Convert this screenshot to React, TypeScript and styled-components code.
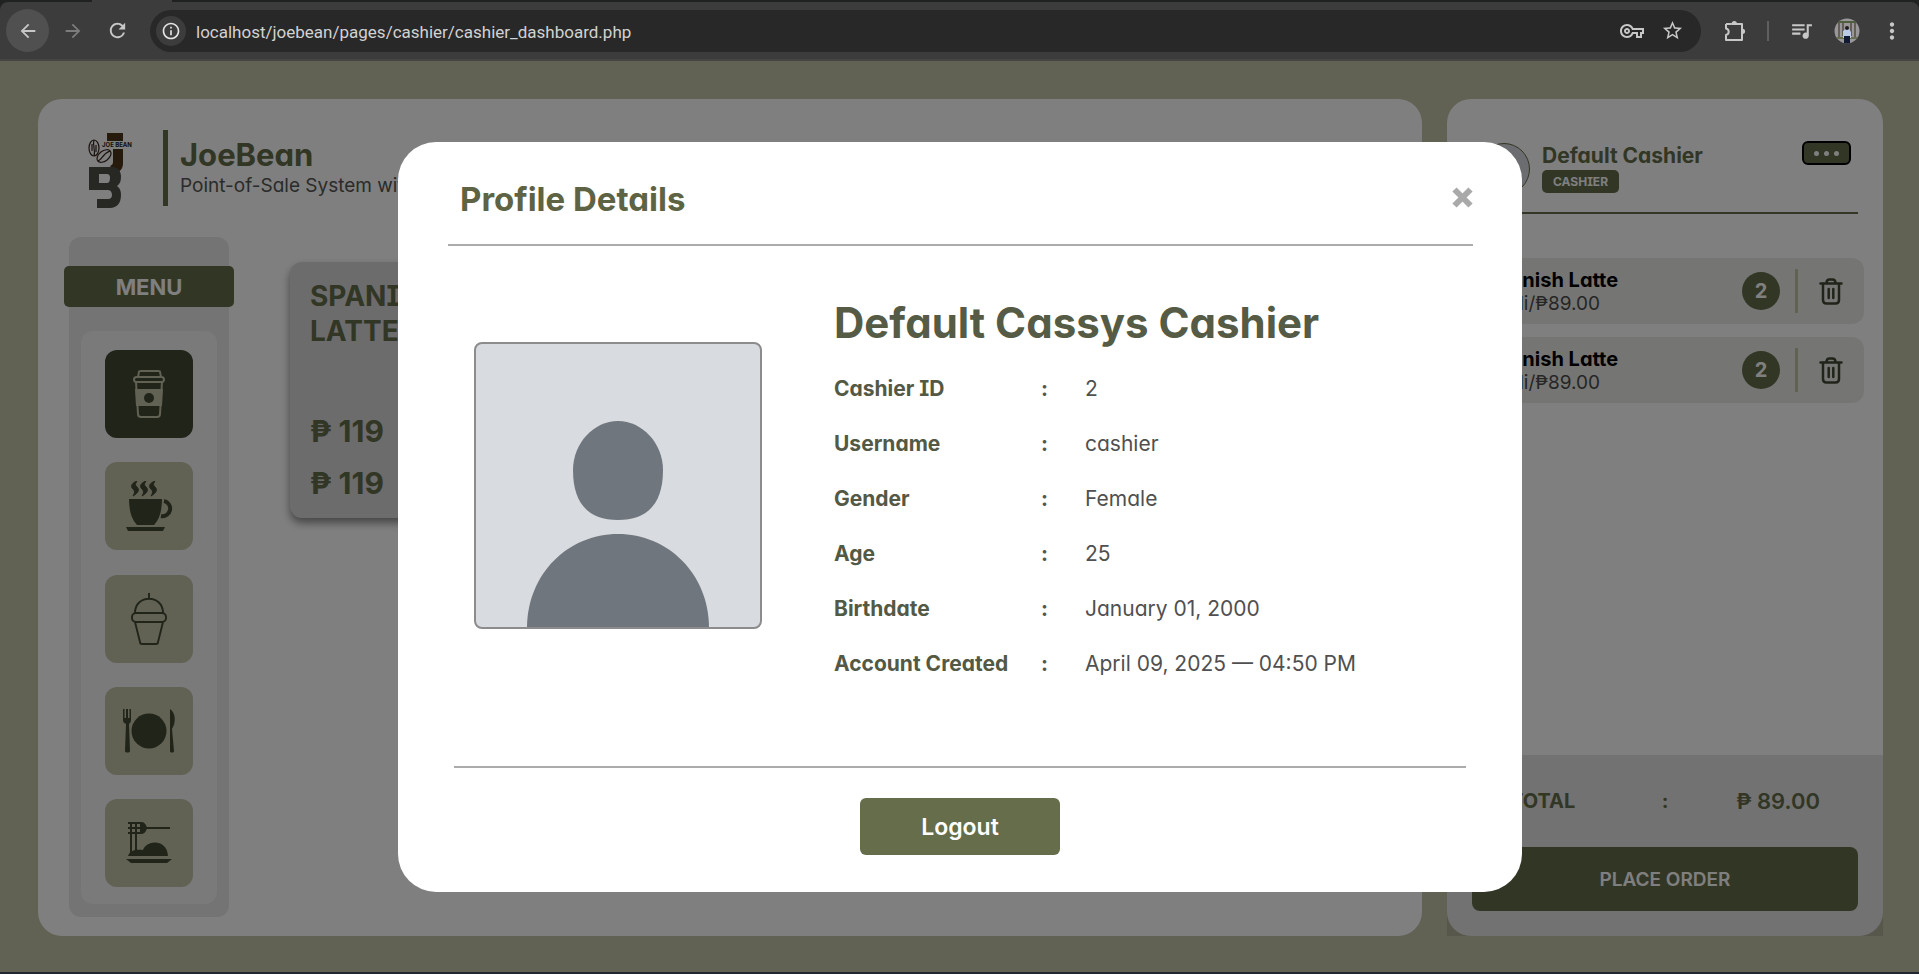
import React from "react";
import styled, { createGlobalStyle, css } from "styled-components";
import {
  MdArrowBack,
  MdArrowForward,
  MdInfoOutline,
  MdMoreVert,
  MdOutlineVpnKey,
  MdQueueMusic,
  MdRefresh,
  MdStarBorder,
} from "react-icons/md";

const olive = "#656d4a";
const oliveDark = "#414833";
const sage = "#c2c2a8";

const GlobalStyle = createGlobalStyle`
  *, *::before, *::after { box-sizing: border-box; }
  body {
    margin: 0;
    background: ${sage};
    font-family: Inter, "Liberation Sans", sans-serif;
    font-feature-settings: "cv08", "cv11";
  }
  h1, h2, h3, p, ul { margin: 0; padding: 0; }
  ul { list-style: none; }
  button { font: inherit; font-feature-settings: inherit; border: 0; padding: 0; cursor: pointer; }
`;

/* ---------- browser frame ---------- */

const Window = styled.div`
  display: flex;
  flex-direction: column;
  min-height: 100vh;
`;

const TabStrip = styled.div`
  display: flex;
  height: 2px;
  padding-left: 92px;
  background: #202121;
`;

const ActiveTab = styled.span`
  width: 80px;
  background: #3c3c3c;
`;

const ToolbarBack = styled.div`
  background: #202121;
`;

const Toolbar = styled.header`
  display: flex;
  align-items: center;
  height: 59px;
  padding: 0 5px 0 6px;
  border-bottom: 2px solid #464744;
  border-radius: 8px 8px 0 0;
  background: #3c3c3c;
  color: #c7c7c7;
`;

const ToolButton = styled.button<{ $active?: boolean; $dim?: boolean }>`
  display: grid;
  place-items: center;
  width: 43px;
  height: 43px;
  margin-right: 2px;
  border-radius: 50%;
  background: ${(p) => (p.$active ? "#505050" : "transparent")};
  color: ${(p) => (p.$dim ? "#7c7c7c" : "#c7c7c7")};
`;

const AddressBar = styled.form`
  display: flex;
  flex: 1;
  align-items: center;
  height: 42px;
  margin-left: 9px;
  padding: 0 9px 0 6px;
  border-radius: 21px;
  background: #282828;
`;

const SiteInfo = styled.button`
  display: grid;
  place-items: center;
  width: 30px;
  height: 30px;
  border-radius: 50%;
  background: #3c3c3c;
  color: #e3e3e3;
`;

const Address = styled.input`
  flex: 1;
  margin-left: 10px;
  border: 0;
  padding: 2px 0 0;
  outline: 0;
  background: transparent;
  color: #d2d2d2;
  font: 17px/24px Roboto, "Noto Sans", sans-serif;
`;

const BarButton = styled.button`
  display: grid;
  place-items: center;
  width: 40px;
  height: 40px;
  background: transparent;
  color: #c7c7c7;
`;

const WideBarButton = styled(BarButton)`
  width: 45px;
`;

const ToolGroup = styled.div`
  display: flex;
  align-items: center;
  padding-left: 14px;
`;

const ToolDivider = styled.span`
  width: 2px;
  height: 20px;
  margin: 0 10px 0 12px;
  background: #5f5f5f;
`;

/* ---------- page ---------- */

const Page = styled.main`
  position: relative;
  display: flex;
  flex: 1;
  gap: 25px;
  padding: 38px 36px 36px 38px;
  background: ${sage};
`;

const Taskbar = styled.div`
  height: 2px;
  background: #22262f;
`;

const Card = styled.section`
  display: flex;
  flex-direction: column;
  border-radius: 24px;
  background: #fff;
`;

const MainCard = styled(Card)`
  flex: 1;
  padding: 31px 26px 19px;
`;

const Brand = styled.header`
  display: flex;
  align-items: flex-start;
  height: 76px;
  padding-left: 24px;
`;

const BrandText = styled.div`
  margin-left: 25px;
  padding-left: 12px;
  border-left: 5px solid ${olive};
  height: 76px;
  padding-top: 6px;
`;

const BrandName = styled.h1`
  color: ${olive};
  font-size: 31px;
  line-height: 37px;
`;

const Tagline = styled.p`
  color: #565656;
  font-size: 19px;
  line-height: 26px;
`;

const Workspace = styled.div`
  display: flex;
  flex: 1;
  gap: 56px;
  padding-top: 31px;
`;

const Sidebar = styled.nav`
  display: flex;
  flex-direction: column;
  align-items: center;
  width: 160px;
  margin-left: 5px;
  padding: 29px 0 13px;
  border-radius: 12px;
  background: #e8e8e8;
`;

const MenuLabel = styled.h2`
  flex: none;
  width: 170px;
  margin-bottom: 24px;
  padding-top: 1px;
  border-radius: 5px;
  background: ${olive};
  color: #fff;
  font-size: 22px;
  line-height: 40px;
  text-align: center;
`;

const CategoryList = styled.ul`
  display: flex;
  flex: 1;
  flex-direction: column;
  align-items: center;
  justify-content: space-between;
  gap: 16px;
  width: 136px;
  padding: 19px 0 17px;
  border-radius: 12px;
  background: #f4f4f4;
`;

const CategoryButton = styled.button<{ $active?: boolean }>`
  display: grid;
  place-items: center;
  width: 88px;
  height: 88px;
  border-radius: 12px;
  background: ${(p) => (p.$active ? oliveDark : sage)};
  color: ${(p) => (p.$active ? sage : oliveDark)};
`;

const Product = styled.article`
  display: flex;
  flex-direction: column;
  width: 250px;
  height: 256px;
  margin: 25px 5px;
  padding: 17px 20px 9px;
  border-radius: 12px;
  background: #d8d8d8;
  box-shadow: 0 5px 8px rgba(0, 0, 0, 0.45);
  color: ${olive};
`;

const ProductName = styled.h3`
  flex: 1;
  font-size: 28px;
  line-height: 35px;
`;

const ProductPrice = styled.p`
  font-size: 30px;
  font-weight: 700;
  line-height: 52px;
`;

/* ---------- order panel ---------- */

const OrderCard = styled(Card)`
  width: 436px;
  padding-top: 42px;
`;

const CashierBar = styled.header`
  display: flex;
  align-items: flex-start;
  height: 73px;
  margin: 0 25px;
  padding: 0 7px 0 6px;
  border-bottom: 2px solid ${olive};
`;

const Avatar = styled.span`
  width: 52px;
  height: 52px;
  margin-top: 2px;
  border: 1px solid ${olive};
  border-radius: 50%;
  background: #d8dbe0;
`;

const CashierInfo = styled.div`
  flex: 1;
  margin-left: 12px;
`;

const CashierName = styled.h2`
  padding-top: 1px;
  color: ${olive};
  font-size: 21px;
  line-height: 28px;
`;

const Badge = styled.span`
  display: inline-block;
  padding: 0 11px;
  border-radius: 5px;
  background: ${olive};
  color: #fff;
  font-size: 12px;
  font-weight: 700;
  line-height: 23px;
`;

const MoreButton = styled.button`
  display: flex;
  align-items: center;
  justify-content: center;
  gap: 5px;
  width: 49px;
  height: 24px;
  border: 2px solid #000;
  border-radius: 6px;
  background: ${olive};
`;

const Dot = styled.span`
  width: 5px;
  height: 5px;
  border-radius: 50%;
  background: #fff;
`;

const OrderList = styled.ul`
  display: flex;
  flex: 1;
  flex-direction: column;
  gap: 13px;
  padding: 44px 19px 0;
`;

const OrderItem = styled.li`
  display: flex;
  align-items: center;
  height: 66px;
  padding: 0 16px 0 18px;
  border-radius: 12px;
  background: #ebebe8;
`;

const ItemText = styled.div`
  flex: 1;
  padding-top: 2px;
`;

const ItemName = styled.h3`
  color: #000;
  font-size: 20px;
  line-height: 24px;
`;

const ItemPrice = styled.p`
  color: #4c4c4c;
  font-size: 19px;
  line-height: 24px;
`;

const Quantity = styled.span`
  width: 38px;
  border-radius: 50%;
  background: ${olive};
  color: #fff;
  font-size: 20px;
  font-weight: 700;
  line-height: 38px;
  text-align: center;
`;

const ItemDivider = styled.span`
  width: 3px;
  height: 44px;
  margin: 0 15px;
  background: ${sage};
`;

const TrashButton = styled.button`
  display: grid;
  place-items: center;
  width: 35px;
  height: 40px;
  background: transparent;
  color: ${oliveDark};
`;

const Checkout = styled.footer`
  padding: 30px 25px 25px;
  background: rgba(0, 0, 0, 0.1);
`;

const TotalRow = styled.p`
  display: grid;
  grid-template-columns: 1fr auto 1fr;
  padding: 0 38px;
  color: ${olive};
  font-size: 20px;
  font-weight: 700;
  line-height: 32px;
`;

const TotalAmount = styled.span`
  font-size: 22px;
  font-weight: 600;
  text-align: right;
`;

const PlaceOrder = styled.button`
  display: block;
  width: 100%;
  height: 64px;
  margin-top: 30px;
  border-radius: 8px;
  background: ${olive};
  color: #fff;
  font-size: 19px;
  font-weight: 600;
`;

/* ---------- profile dialog ---------- */

const Overlay = styled.div`
  position: absolute;
  inset: 0;
  display: grid;
  place-items: center;
  padding-left: 1px;
  background: rgba(0, 0, 0, 0.5);
`;

const Dialog = styled.section`
  display: flex;
  flex-direction: column;
  width: 90%;
  max-width: 1124px;
  min-height: 750px;
  border-radius: 38px;
  background: #fff;
`;

const rule = css`2px solid #ababab`;

const DialogHeader = styled.header`
  display: flex;
  align-items: center;
  justify-content: space-between;
  height: 104px;
  margin: 0 49px 0 50px;
  padding: 13px 0 0 12px;
  border-bottom: ${rule};
`;

const DialogTitle = styled.h2`
  color: #5e6343;
  font-size: 33px;
  line-height: 40px;
`;

const CloseButton = styled.button`
  display: grid;
  padding-bottom: 3px;
  background: transparent;
  color: #a9a9a9;
`;

const DialogBody = styled.div`
  display: flex;
  flex: 1;
  gap: 72px;
  padding: 51px 76px 0;
`;

const Photo = styled.div`
  flex: none;
  width: 288px;
  height: 287px;
  margin-top: 45px;
  overflow: hidden;
  border: 2px solid #8c8c8c;
  border-radius: 8px;
  background: #d8dbe0;
`;

const FullName = styled.h3`
  margin-bottom: 12px;
  color: #565b45;
  font-size: 42px;
  line-height: 52px;
  white-space: nowrap;
`;

const Details = styled.table`
  border-collapse: collapse;
  font-size: 21px;
  line-height: 55px;
  text-align: left;
  white-space: nowrap;
`;

const DetailLabel = styled.th`
  width: 207px;
  padding: 0;
  color: #535944;
`;

const DetailColon = styled.td`
  width: 44px;
  padding: 0;
  color: #535944;
  font-weight: 700;
`;

const DetailValue = styled.td`
  padding: 0;
  color: #505050;
`;

const DialogFooter = styled.footer`
  display: flex;
  justify-content: center;
  margin: 0 56px;
  padding: 30px 0 37px;
  border-top: ${rule};
`;

const LogoutButton = styled.button`
  width: 200px;
  height: 57px;
  padding-top: 1px;
  border-radius: 6px;
  background: ${olive};
  color: #fff;
  font-size: 23px;
  font-weight: 600;
`;

/* ---------- drawings ---------- */

const PuzzleIcon = () => (
  <svg width="24" height="24" viewBox="0 0 24 24" fill="none" stroke="currentColor" strokeWidth="2" strokeLinejoin="round">
    <path d="M3 5h5.5M14 5h5v5.5M19 15v6H3v-5c3.600-1 3.600-5.500 0-6.500V5" />
    <path d="M8.300 5h6M19 9.500v6" />
    <path d="M8.700 4.500a2.600 2.600 0 0 1 5.200 0zM19.500 9.700a2.600 2.600 0 0 1 0 5.200z" fill="currentColor" stroke="none" />
  </svg>
);

const ProfilePicture = () => (
  <svg width="26" height="26" viewBox="0 0 26 26">
    <clipPath id="face"><circle cx="13" cy="13" r="12.500" /></clipPath>
    <g clipPath="url(#face)">
      <rect width="26" height="26" fill="#9a979b" />
      <path d="M3 3h20v2H3z" fill="#4e5d3c" />
      <path d="M5 5v14M9 5v13M17 5v13M21 5v14" stroke="#514c40" strokeWidth="1.500" />
      <path d="M2 19h22v2H2z" fill="#66704f" />
      <path d="M9 13l3-2h3l2 3v6H9z" fill="#b9cbe8" />
      <path d="M10 18h6v8h-6z" fill="#101a33" />
      <circle cx="13" cy="10" r="2" fill="#241d1d" />
    </g>
  </svg>
);

const LogoText = styled.text`
  font: 700 6px Inter, sans-serif;
`;

const Logo = () => (
  <svg width="50" height="79" viewBox="0 -3 50 79" aria-label="JoeBean logo">
    <path d="M19 0h16v8H19z" fill="#4a3418" />
    <path d="M25 16h10v14c0 5-2 8-7 10l-6-7c2-1 3-2 3-4z" fill="#4a3418" />
    <LogoText x="14" y="14" fill="#2a1a14">JOE BEAN</LogoText>
    <g fill="none" stroke="#35241d" strokeWidth="1.200">
      <ellipse cx="6" cy="15" rx="5" ry="8" />
      <path d="M6 7c-2 5 2 10 0 16M4 11v7M8 12v7" />
      <ellipse cx="16" cy="23" rx="8" ry="5" transform="rotate(-38 16 23)" />
      <path d="M10 28c4-1 4-7 12-10" />
    </g>
    <path
      d="M1 34h23c6 0 9 4 9 10 0 4-1 7-4 9 3 2 4 5 4 9 0 8-4 13-11 13H9v-9h11c3 0 4-2 4-4s-1-5-4-5H1zM11 41v9h8c2 0 3-2 3-5s-1-4-3-4z"
      fill="#4e5149"
      fillRule="evenodd"
    />
  </svg>
);

const CupIcon = () => (
  <svg width="32" height="48" viewBox="0 0 32 48" fill="none" stroke="currentColor" strokeWidth="2">
    <path d="M5 7l1-5c0-1 1-1 2-1h17c1 0 2 0 2 1l1 5" />
    <rect x="1" y="7" width="30" height="5" rx="2.500" />
    <path d="M3 12l2 32c0 2 1 3 3 3h16c2 0 3-1 3-3l2-32" />
    <path d="M2 19h28l-1 17H3z" fill="currentColor" stroke="none" />
    <circle cx="16" cy="28" r="5" fill={oliveDark} stroke="none" />
  </svg>
);

const HotIcon = () => (
  <svg width="48" height="50" viewBox="0 0 48 50" fill="currentColor">
    <path d="M4 18h33c0 10-2 20-8 26H12C6 38 4 28 4 18z" />
    <path d="M39 20a7.500 7.500 0 0 1-3 15" fill="none" stroke="currentColor" strokeWidth="4" />
    <path d="M1 46h39l-2 4H3z" />
    {[6, 15, 24].map((x) => (
      <path
        key={x}
        d={`M${x + 6} 0c-5 2-7 5-4 8 2 2 2 4 0 7 5-3 7-6 4-9-2-2-2-3 0-6z`}
        stroke="currentColor"
      />
    ))}
  </svg>
);

const FrappeIcon = () => (
  <svg width="36" height="52" viewBox="0 0 36 52" fill="none" stroke="currentColor" strokeWidth="1.900">
    <path d="M18 0v6M4 20C4 1 32 1 32 20" />
    <rect x="1" y="20" width="34" height="9" rx="4" />
    <path d="M4 29l5 20c0 1 1 2 2 2h14c1 0 2-1 2-2l5-20" />
  </svg>
);

const PlateIcon = () => (
  <svg width="54" height="44" viewBox="0 0 54 44" fill="currentColor">
    <circle cx="27" cy="22" r="17.500" />
    <path d="M1 0h1.500v9h1.500V0h2v9h1.500V0H9v11c0 2-1 3-2 4l1 27c0 2-5 2-5 0l1-27c-2-1-3-2-3-4z" />
    <path d="M48 0c6 4 6 14 2 20l2 22c0 2-4 2-4 0z" />
  </svg>
);

const PastaIcon = () => (
  <svg width="46" height="42" viewBox="0 0 46 42" fill="currentColor">
    <path d="M2 1h13c4 0 5 5 5 5s-1 5-5 5H2M2 6h42" fill="none" stroke="currentColor" strokeWidth="2" />
    <path d="M14 0c5 0 6 3 6 6s-1 6-6 6z" />
    <path d="M5 1v30M10 1v28" stroke="currentColor" strokeWidth="2" />
    <path d="M2 34c2-6 8-7 15-6 3-10 24-12 25 6z" />
    <path d="M0 37h46l-5 4H5z" />
  </svg>
);

const TrashIcon = () => (
  <svg width="24" height="27" viewBox="0 0 24 27" fill="none" stroke="currentColor" strokeWidth="2.500" strokeLinecap="round">
    <path d="M1.500 5.500h21M7.500 5c0-2.500 1-3.500 3-3.500h3c2 0 3 1 3 3.500" />
    <path d="M4 6v16c0 2.500 1 3.500 3.500 3.500h9c2.500 0 3.500-1 3.500-3.500V6M9.700 11v9M14.300 11v9" />
  </svg>
);

const CloseIcon = () => (
  <svg width="21" height="21" viewBox="0 0 21 21" stroke="currentColor" strokeWidth="6">
    <path d="M2.500 2.500l16 16M18.500 2.500l-16 16" />
  </svg>
);

const PersonPicture = () => (
  <svg width="284" height="284" viewBox="0 0 284 284" fill="#70767d">
    <path d="M142 77c24 0 45 22 45 49 0 32-14 50-45 50s-45-18-45-50c0-27 21-49 45-49z" />
    <path d="M51 284C51 230 92 190 142 190s91 40 91 94z" />
  </svg>
);

/* ---------- data ---------- */

const categories = [
  { name: "Iced coffee", Icon: CupIcon },
  { name: "Hot coffee", Icon: HotIcon },
  { name: "Frappe", Icon: FrappeIcon },
  { name: "Meals", Icon: PlateIcon },
  { name: "Pasta", Icon: PastaIcon },
];

const orders = [
  { id: 1, name: "Spanish Latte", price: "Medi/₱89.00", quantity: 2 },
  { id: 2, name: "Spanish Latte", price: "Medi/₱89.00", quantity: 2 },
];

const details = [
  ["Cashier ID", "2"],
  ["Username", "cashier"],
  ["Gender", "Female"],
  ["Age", "25"],
  ["Birthdate", "January 01, 2000"],
  ["Account Created", "April 09, 2025 — 04:50 PM"],
];

export default function App() {
  return (
    <Window>
      <GlobalStyle />
      <TabStrip><ActiveTab /></TabStrip>
      <ToolbarBack>
        <Toolbar>
          <ToolButton $active aria-label="Back"><MdArrowBack size={22} /></ToolButton>
          <ToolButton $dim aria-label="Forward"><MdArrowForward size={22} /></ToolButton>
          <ToolButton aria-label="Reload"><MdRefresh size={23} /></ToolButton>
          <AddressBar>
            <SiteInfo type="button" aria-label="Site information"><MdInfoOutline size={20} /></SiteInfo>
            <Address aria-label="Address" defaultValue="localhost/joebean/pages/cashier/cashier_dashboard.php" />
            <BarButton type="button" aria-label="Passwords"><MdOutlineVpnKey size={24} /></BarButton>
            <BarButton type="button" aria-label="Bookmark"><MdStarBorder size={23} /></BarButton>
          </AddressBar>
          <ToolGroup>
            <BarButton aria-label="Extensions"><PuzzleIcon /></BarButton>
            <ToolDivider />
            <WideBarButton aria-label="Media"><MdQueueMusic size={25} /></WideBarButton>
            <WideBarButton aria-label="Profile"><ProfilePicture /></WideBarButton>
            <WideBarButton aria-label="Browser menu"><MdMoreVert size={26} /></WideBarButton>
          </ToolGroup>
        </Toolbar>
      </ToolbarBack>

      <Page>
        <MainCard>
          <Brand>
            <Logo />
            <BrandText>
              <BrandName>JoeBean</BrandName>
              <Tagline>Point-of-Sale System with Inventory</Tagline>
            </BrandText>
          </Brand>
          <Workspace>
            <Sidebar>
              <MenuLabel>MENU</MenuLabel>
              <CategoryList>
                {categories.map(({ name, Icon }, index) => (
                  <li key={name}>
                    <CategoryButton $active={index === 0} aria-label={name}><Icon /></CategoryButton>
                  </li>
                ))}
              </CategoryList>
            </Sidebar>
            <Product>
              <ProductName>SPANISH LATTE</ProductName>
              <ProductPrice>₱ 119</ProductPrice>
              <ProductPrice>₱ 119</ProductPrice>
            </Product>
          </Workspace>
        </MainCard>

        <OrderCard>
          <CashierBar>
            <Avatar />
            <CashierInfo>
              <CashierName>Default Cashier</CashierName>
              <Badge>CASHIER</Badge>
            </CashierInfo>
            <MoreButton aria-label="Profile options"><Dot /><Dot /><Dot /></MoreButton>
          </CashierBar>
          <OrderList>
            {orders.map((order) => (
              <OrderItem key={order.id}>
                <ItemText>
                  <ItemName>{order.name}</ItemName>
                  <ItemPrice>{order.price}</ItemPrice>
                </ItemText>
                <Quantity>{order.quantity}</Quantity>
                <ItemDivider />
                <TrashButton aria-label="Remove item"><TrashIcon /></TrashButton>
              </OrderItem>
            ))}
          </OrderList>
          <Checkout>
            <TotalRow>
              <span>TOTAL</span>
              <span>:</span>
              <TotalAmount>₱ 89.00</TotalAmount>
            </TotalRow>
            <PlaceOrder>PLACE ORDER</PlaceOrder>
          </Checkout>
        </OrderCard>

        <Overlay>
          <Dialog role="dialog" aria-labelledby="profile-title">
            <DialogHeader>
              <DialogTitle id="profile-title">Profile Details</DialogTitle>
              <CloseButton aria-label="Close"><CloseIcon /></CloseButton>
            </DialogHeader>
            <DialogBody>
              <Photo><PersonPicture /></Photo>
              <div>
                <FullName>Default Cassys Cashier</FullName>
                <Details>
                  <tbody>
                    {details.map(([label, value]) => (
                      <tr key={label}>
                        <DetailLabel scope="row">{label}</DetailLabel>
                        <DetailColon>:</DetailColon>
                        <DetailValue>{value}</DetailValue>
                      </tr>
                    ))}
                  </tbody>
                </Details>
              </div>
            </DialogBody>
            <DialogFooter>
              <LogoutButton>Logout</LogoutButton>
            </DialogFooter>
          </Dialog>
        </Overlay>
      </Page>
      <Taskbar />
    </Window>
  );
}
